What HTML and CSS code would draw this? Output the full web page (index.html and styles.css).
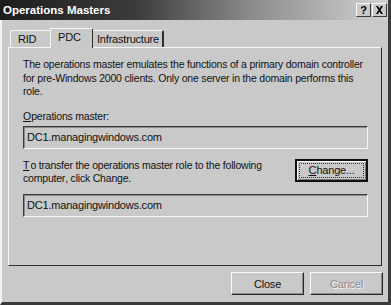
FILE: index.html
```html
<!DOCTYPE html>
<html lang="en">
<head>
    <meta charset="UTF-8">
    <title>Operations Masters</title>
    <link rel="stylesheet" href="styles.css">
</head>
<body>
    <div class="window">
        <div class="titlebar">
            <span class="title">Operations Masters</span>
            <div class="caption-buttons">
                <span class="cap-btn">?</span>
                <span class="cap-btn close-x">
                    <svg width="9" height="8" viewBox="0 0 9 8"><path d="M1 0h2l1.5 2.5L6 0h2L5.5 4 8 8H6L4.5 5.5 3 8H1l2.5-4z" fill="#000"/></svg>
                </span>
            </div>
        </div>

        <div class="tabstrip">
            <div class="tab">RID</div>
            <div class="tab active">PDC</div>
            <div class="tab">Infrastructure</div>
        </div>

        <div class="panel">
            <p class="desc">The operations master emulates the functions of a primary domain controller for pre-Windows 2000 clients. Only one server in the domain performs this role.</p>

            <div class="label"><u>O</u>perations master:</div>
            <div class="field">DC1.managingwindows.com</div>

            <div class="transfer">
                <div class="transfer-text"><u>T</u>o transfer the operations master role to the following computer, click Change.</div>
                <button class="btn default"><span class="focus"><u>C</u>hange...</span></button>
            </div>
            <div class="field">DC1.managingwindows.com</div>
        </div>

        <div class="footer">
            <button class="btn">Close</button>
            <button class="btn disabled">Cancel</button>
        </div>
    </div>
</body>
</html>
```

FILE: styles.css
```css
body {
    margin: 0;
    background: #c9c9c9;
    font-family: "Liberation Sans", Arial, sans-serif;
    font-size: 10.5px;
    letter-spacing: -0.2px;
    color: #111;
    font-kerning: none;
}
u {
    letter-spacing: 0;
}
.window {
    width: 391px;
    height: 305px;
    box-sizing: border-box;
    background: #c9c9c9;
    border-left: 2px solid #f4f4f4;
    border-right: 3px solid #3a3a3a;
    border-bottom: 3px solid #3a3a3a;
    display: flex;
    flex-direction: column;
}
.titlebar {
    height: 20px;
    margin-left: -2px;
    background: linear-gradient(to right, #1c1c1c 0%, #3c3c3c 35%, #8c8c8c 65%, #d2d2d2 100%);
    display: flex;
    align-items: center;
    justify-content: space-between;
    padding: 0 1px 0 3px;
}
.title {
    color: #fff;
    font-weight: bold;
    font-size: 11.5px;
    letter-spacing: 0;
}
.caption-buttons {
    display: flex;
    gap: 1px;
}
.cap-btn {
    width: 15px;
    height: 14px;
    box-sizing: border-box;
    background: #c9c9c9;
    border: 1px solid;
    border-color: #fafafa #3a3a3a #3a3a3a #fafafa;
    font-weight: bold;
    font-size: 11px;
    line-height: 12px;
    color: #000;
    display: flex;
    justify-content: center;
    align-items: center;
}
.tabstrip {
    display: flex;
    align-items: flex-end;
    height: 27px;
    margin-left: 8px;
}
.tab {
    height: 16px;
    padding: 0 7px;
    line-height: 16px;
    border: 1px solid;
    border-color: #f6f6f6 #2e2e2e transparent #f6f6f6;
    border-bottom: none;
    border-radius: 2px 2px 0 0;
    font-size: 11px;
}
.tab:first-child {
    width: 25px;
}
.tab.active {
    height: 19px;
    width: 27px;
    margin: 0 -1px;
    line-height: 17px;
    background: #c9c9c9;
    position: relative;
    z-index: 1;
    margin-bottom: -1px;
}
.tab:last-child {
    padding: 0 3px 0 4px;
    border-right: 2px solid #2e2e2e;
}
.panel {
    margin-left: 6px;
    width: 374px;
    height: 219px;
    box-sizing: border-box;
    border: 1px solid;
    border-color: #f6f6f6 #2e2e2e #2e2e2e #f6f6f6;
    padding: 10px 13px 0 14px;
}
.desc {
    margin: 0;
    line-height: 13.5px;
}
.label {
    margin-top: 11px;
    line-height: 13px;
}
.field {
    margin-top: 3px;
    height: 23px;
    box-sizing: border-box;
    border: 1px solid;
    border-color: #3a3a3a #f6f6f6 #f6f6f6 #3a3a3a;
    box-shadow: inset 1px 1px 0 #8a8a8a;
    padding: 4px 0 0 3px;
    font-size: 11px;
}
.transfer {
    display: flex;
    justify-content: space-between;
    align-items: flex-start;
    margin-top: 10px;
    margin-bottom: 8px;
}
.transfer-text {
    width: 250px;
    line-height: 13.5px;
}
.transfer-text u {
    margin-right: 1px;
}
.btn {
    width: 73px;
    height: 23px;
    box-sizing: border-box;
    background: #c9c9c9;
    border: 1px solid;
    border-color: #fafafa #2a2a2a #2a2a2a #fafafa;
    box-shadow: inset -1px -1px 0 #8a8a8a;
    font-family: "Liberation Sans", Arial, sans-serif;
    font-size: 11px;
    letter-spacing: -0.2px;
    color: #111;
    padding: 0;
}
.btn.default {
    border: 2px solid #111;
    box-shadow: inset 1px 1px 0 #fafafa, inset -1px -1px 0 #7a7a7a;
    display: flex;
    align-items: center;
    justify-content: center;
}
.focus {
    display: block;
    width: 63px;
    line-height: 13px;
    border: 1px dotted #333;
}
.footer {
    display: flex;
    justify-content: flex-end;
    gap: 6px;
    padding: 6px 5px 0 0;
}
.btn.disabled {
    color: #8c8c8c;
    text-shadow: 1px 1px 0 #f4f4f4;
}
```
